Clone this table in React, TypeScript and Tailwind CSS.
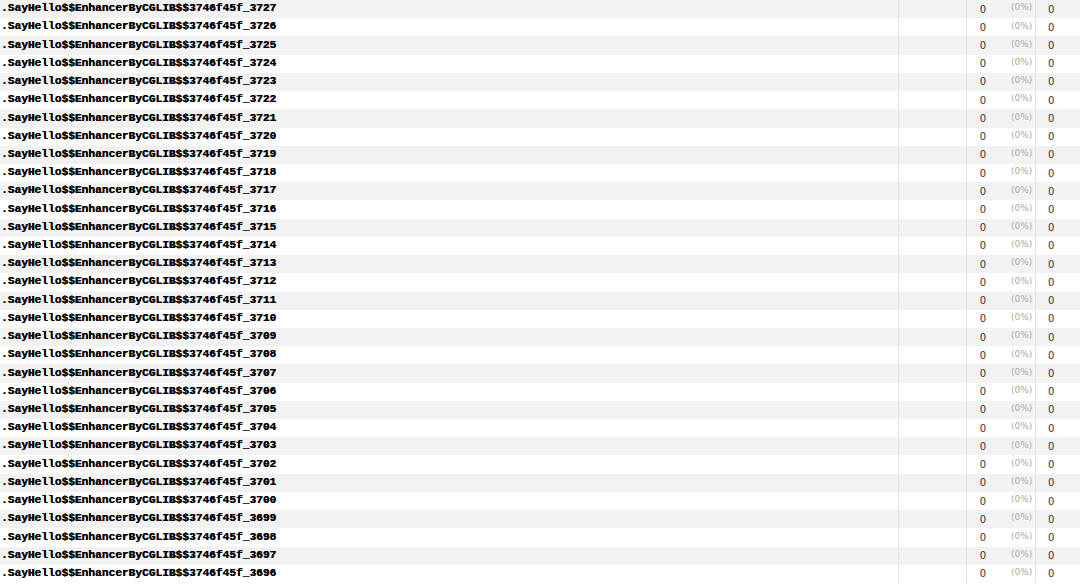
import React from "react";

const rows = Array.from({ length: 32 }, (_, i) => 3727 - i);

export default function App() {
  return (
    <div className="w-[1080px] h-[584px] overflow-hidden bg-white">
      {rows.map((n, i) => (
        <div
          key={n}
          className={`flex h-[18.22px] items-center ${i % 2 === 0 ? "bg-[#f2f2f2]" : "bg-white"}`}
        >
          <div className="w-[898px] h-full flex items-center pl-[1px] pb-[1px] text-[11.2px] font-bold text-black [font-family:'Liberation_Mono',monospace] whitespace-nowrap [text-shadow:0.3px_0_0_#000]">
            .SayHello$$EnhancerByCGLIB$$3746f45f_{n}
          </div>
          <div className="w-[68px] h-full border-l border-[#dde0ee]" />
          <div className="w-[69px] h-full border-l border-[#dde0ee] flex items-center [font-family:'DejaVu_Sans',sans-serif]">
            <span className="w-[19px] text-right text-[10px] text-[#333]">0</span>
            <span className="ml-[25px] text-[9px] text-[#aaa] pb-[2px]">(0%)</span>
          </div>
          <div className="flex-1 h-full border-l border-[#dde0ee] flex items-center pl-[12px] text-[10px] text-[#333] [font-family:'DejaVu_Sans',sans-serif]">
            0
          </div>
        </div>
      ))}
    </div>
  );
}
